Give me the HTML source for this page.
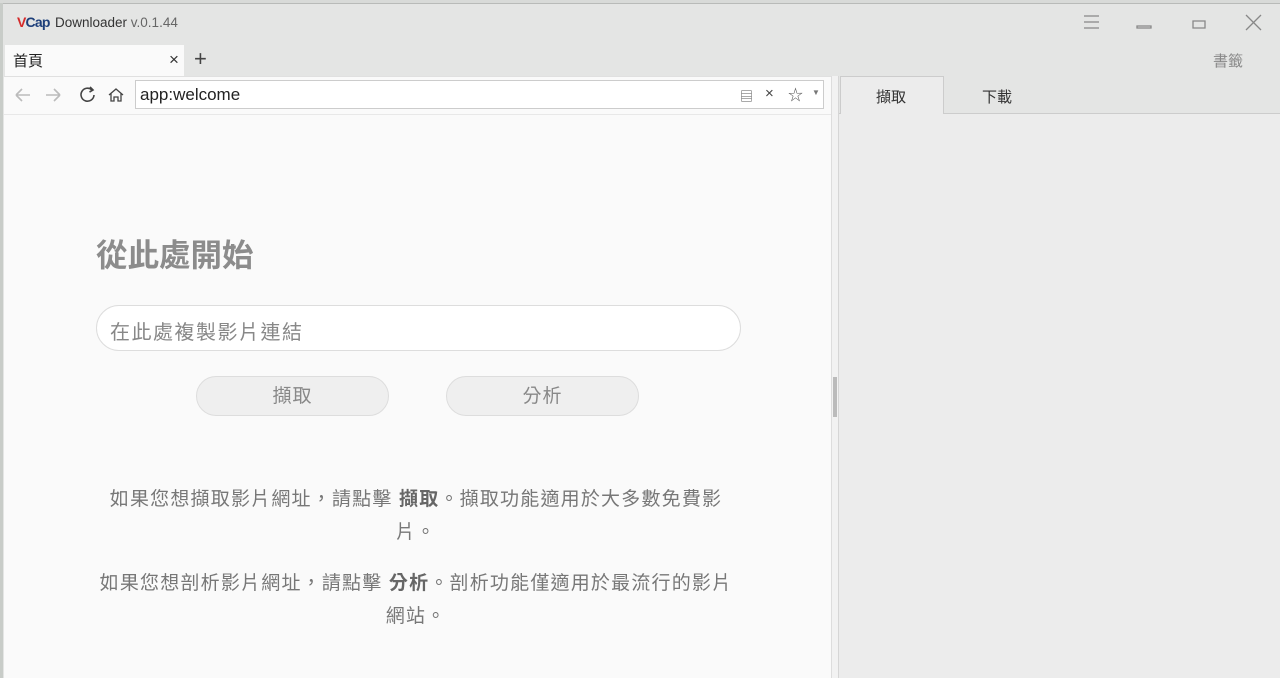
<!DOCTYPE html>
<html><head><meta charset="utf-8"><style>
*{margin:0;padding:0;box-sizing:border-box}
body{width:1280px;height:678px;overflow:hidden;background:#e4e5e4;font-family:"Liberation Sans","Noto Sans CJK TC",sans-serif;position:relative}
.a{position:absolute}
.c{color:#777;font-size:19px;letter-spacing:1.2px;text-align:center;width:760px;left:36px}
</style></head><body>
<div class="a" style="left:0;top:0;width:1280px;height:3px;background:#d8dad8"></div>
<div class="a" style="left:0;top:3px;width:3px;height:675px;background:#c8ccc8"></div>
<div class="a" style="left:3px;top:3px;width:1277px;height:1px;background:#b8bab8"></div>
<div class="a" style="left:17px;top:14px;font-size:14px;font-weight:bold;letter-spacing:-0.8px"><span style="color:#d42a2a">V</span><span style="color:#1d3f7a">Cap</span></div>
<div class="a" style="left:55px;top:15px;font-size:13.5px;color:#333">Downloader <span style="color:#666">v.0.1.44</span></div>
<svg class="a" style="left:1080px;top:13px" width="190" height="20" fill="none" stroke="#888" stroke-width="1.3">
<path d="M4 3h15M4 9h15M4 15h15"/><path d="M57 13h14v2h-14z"/><path d="M113 8h12v7h-12z"/><path d="M166 2l15 15M181 2l-15 15"/></svg>
<div class="a" style="left:5px;top:45px;width:179px;height:31px;background:#fafafa"></div>
<div class="a" style="left:13px;top:50px;font-size:15px;color:#222">首頁</div>
<div class="a" style="left:169px;top:50px;font-size:17px;color:#333">×</div>
<div class="a" style="left:194px;top:46px;font-size:22px;color:#444">+</div>
<div class="a" style="left:1213px;top:50px;font-size:15px;color:#888">書籤</div>
<div class="a" style="left:4px;top:76px;width:827px;height:602px;background:#fafafa;border-top:1px solid #e0e0e0"></div>
<div class="a" style="left:4px;top:114px;width:827px;height:1px;background:#e8e8e8"></div>
<svg class="a" style="left:12px;top:84px" width="116" height="22" fill="none" stroke-width="1.6">
<path d="M4 11h14M4 11l6-6M4 11l6 6" stroke="#bbb"/><path d="M34 11h14M48 11l-6-6M48 11l-6 6" stroke="#bbb"/>
<path d="M80 6a6.5 6.5 0 1 0 2 5" stroke="#444"/><path d="M78 3l3 3-3.5 2" stroke="#444"/>
<path d="M97 11l7-6 7 6M99 9v8h3v-4h4v4h3v-8" stroke="#444" stroke-width="1.3"/></svg>
<div class="a" style="left:135px;top:80px;width:689px;height:29px;background:#fff;border:1px solid #ccc"></div>
<div class="a" style="left:140px;top:85px;font-size:17px;color:#222">app:welcome</div>
<div class="a" style="left:740px;top:86px;font-size:13px;color:#555">▤</div>
<div class="a" style="left:765px;top:85px;font-size:15px;color:#444">×</div>
<div class="a" style="left:788px;top:84px;font-size:15px;color:#555">☆</div>
<div class="a" style="left:812px;top:88px;font-size:8px;color:#777">▼</div>
<div class="a" style="left:831px;top:76px;width:8px;height:602px;background:#f2f2f2;border-left:1px solid #ddd;border-right:1px solid #d6d6d6"></div>
<div class="a" style="left:833px;top:377px;width:4px;height:40px;background:#bbb"></div>
<div class="a" style="left:839px;top:113px;width:441px;height:565px;background:#ececec;border-top:1px solid #ccc"></div>
<div class="a" style="left:840px;top:76px;width:104px;height:38px;background:#ececec;border:1px solid #ccc;border-bottom:none"></div>
<div class="a" style="left:876px;top:86px;font-size:15px;color:#333">擷取</div>
<div class="a" style="left:982px;top:86px;font-size:15px;color:#333">下載</div>
<div class="a" style="left:96px;top:230px;font-size:31.5px;font-weight:bold;color:#8c8c8c">從此處開始</div>
<div class="a" style="left:96px;top:305px;width:645px;height:46px;background:#fff;border:1px solid #ddd;border-radius:23px"></div>
<div class="a" style="left:110px;top:316px;font-size:20px;letter-spacing:1.5px;color:#888">在此處複製影片連結</div>
<div class="a" style="left:196px;top:376px;width:193px;height:40px;background:#efefef;border:1px solid #ddd;border-radius:20px;text-align:center;line-height:40px;font-size:19px;letter-spacing:1px;color:#888">擷取</div>
<div class="a" style="left:446px;top:376px;width:193px;height:40px;background:#efefef;border:1px solid #ddd;border-radius:20px;text-align:center;line-height:40px;font-size:19px;letter-spacing:1px;color:#888">分析</div>
<div class="a c" style="top:484px">如果您想擷取影片網址，請點擊 <b style="color:#666">擷取</b>。擷取功能適用於大多數免費影</div>
<div class="a c" style="top:517px">片。</div>
<div class="a c" style="top:568px">如果您想剖析影片網址，請點擊 <b style="color:#666">分析</b>。剖析功能僅適用於最流行的影片</div>
<div class="a c" style="top:601px">網站。</div>
</body></html>
